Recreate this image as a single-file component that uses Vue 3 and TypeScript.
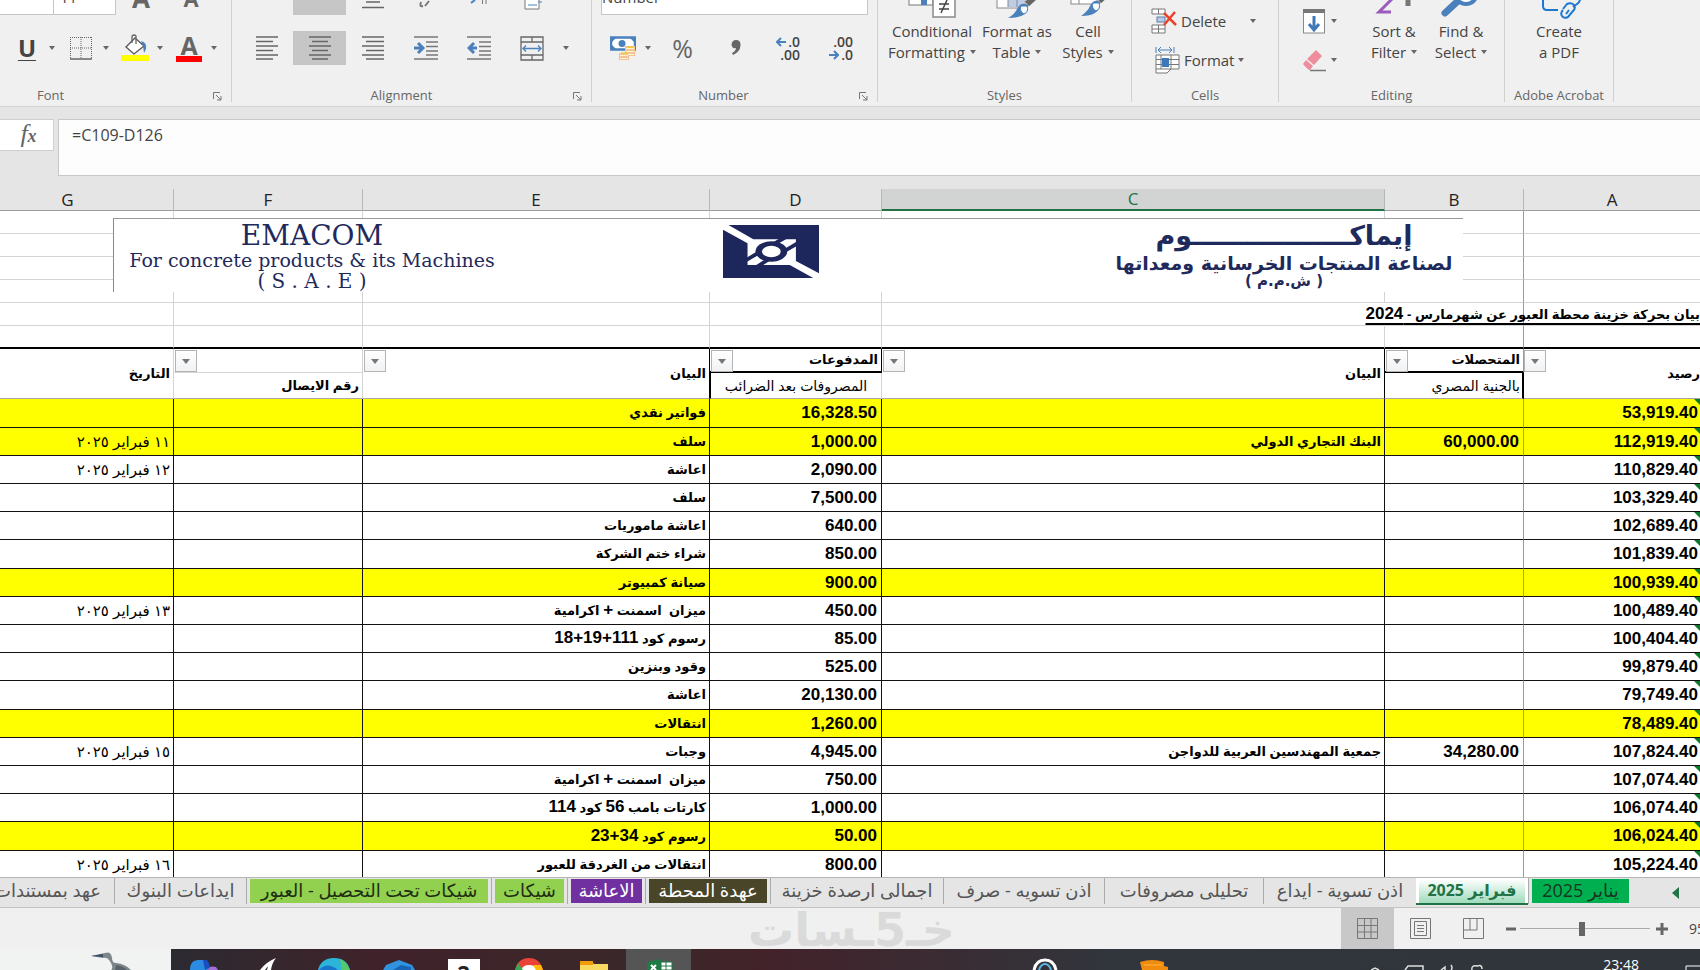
<script setup lang="ts">
import { ref } from 'vue'

interface Row {
  date?: string
  note: string
  paid: string
  source?: string
  received?: string
  balance: string
  marked?: boolean
}

interface SheetTab {
  name: string
  width: number
  kind: string
}

const columns = ['G', 'F', 'E', 'D', 'C', 'B', 'A']
const formula = ref('=C109-D126')
const zoom = ref(95)

const rows: Row[] = [
  { note: 'فواتير نقدي', paid: '16,328.50', balance: '53,919.40', marked: true },
  { date: '١١ فبراير ٢٠٢٥', note: 'سلف', paid: '1,000.00', source: 'البنك التجاري الدولي', received: '60,000.00', balance: '112,919.40', marked: true },
  { date: '١٢ فبراير ٢٠٢٥', note: 'اعاشة', paid: '2,090.00', balance: '110,829.40' },
  { note: 'سلف', paid: '7,500.00', balance: '103,329.40' },
  { note: 'اعاشة ماموريات', paid: '640.00', balance: '102,689.40' },
  { note: 'شراء ختم الشركة', paid: '850.00', balance: '101,839.40' },
  { note: 'صيانة كمبيوتر', paid: '900.00', balance: '100,939.40', marked: true },
  { date: '١٣ فبراير ٢٠٢٥', note: 'ميزان  اسمنت + اكرامية', paid: '450.00', balance: '100,489.40' },
  { note: 'رسوم كود 111+19+18', paid: '85.00', balance: '100,404.40' },
  { note: 'وقود وبنزين', paid: '525.00', balance: '99,879.40' },
  { note: 'اعاشة', paid: '20,130.00', balance: '79,749.40' },
  { note: 'انتقالات', paid: '1,260.00', balance: '78,489.40', marked: true },
  { date: '١٥ فبراير ٢٠٢٥', note: 'وجبات', paid: '4,945.00', source: 'جمعية المهندسين العربية للدواجن', received: '34,280.00', balance: '107,824.40' },
  { note: 'ميزان  اسمنت + اكرامية', paid: '750.00', balance: '107,074.40' },
  { note: 'كارتات بامب 56 كود 114', paid: '1,000.00', balance: '106,074.40' },
  { note: 'رسوم كود 34+23', paid: '50.00', balance: '106,024.40', marked: true },
  { date: '١٦ فبراير ٢٠٢٥', note: 'انتقالات من الغردقة للعبور', paid: '800.00', balance: '105,224.40' },
]

const tabs: SheetTab[] = [
  { name: 'يناير 2025', width: 104, kind: 'emerald' },
  { name: 'فبراير 2025', width: 112, kind: 'active' },
  { name: 'اذن تسوية - ايداع', width: 153, kind: 'plain' },
  { name: 'تحليلى مصروفات', width: 159, kind: 'plain' },
  { name: 'اذن تسويه - صرف', width: 161, kind: 'plain' },
  { name: 'اجمالى ارصدة خزينة', width: 173, kind: 'plain' },
  { name: 'عهدة المحطة', width: 125, kind: 'brown' },
  { name: 'الاعاشة', width: 78, kind: 'purple' },
  { name: 'شيكات', width: 76, kind: 'lime' },
  { name: 'شيكات تحت التحصيل - العبور', width: 245, kind: 'lime' },
  { name: 'ايداعات البنوك', width: 132, kind: 'plain' },
  { name: 'عهد بمستندات', width: 134, kind: 'plain' },
]

function parts(text: string): string[] {
  return text.split(/([0-9+]+)/).filter((p) => p !== '')
}
function isNumber(text: string): boolean {
  return /^[0-9+]+$/.test(text)
}
</script>

<template>
  <div class="window">
    <header class="ribbon">
      <section class="group g-font">
        <div class="line top">
          <input class="box name" aria-label="Font name" />
          <input class="box size" value="11" aria-label="Font size" />
          <button class="tool letter grow" aria-label="Increase font size">A</button>
          <button class="tool letter" aria-label="Decrease font size">A</button>
        </div>
        <div class="line">
          <span class="split">
            <button class="icon under" aria-label="Underline">U</button>
            <button class="caret" aria-label="Underline options"></button>
          </span>
          <span class="split">
            <button class="icon" aria-label="Borders">
              <svg width="24" height="24" viewBox="0 0 24 24" fill="none" stroke="#666">
                <path d="M1 1.5H23M1.5 1V22M22.5 1V22M12 1V22M1 12H23" stroke-dasharray="1 1" />
                <path d="M1 23H23" stroke-width="1.5" />
              </svg>
            </button>
            <button class="caret" aria-label="Border options"></button>
          </span>
          <span class="split">
            <button class="icon" aria-label="Fill color">
              <svg width="28" height="28" viewBox="0 0 28 28">
                <path d="M14 4L23 12L13 20L5 13Z" fill="#fff" stroke="#555" stroke-width="1.3" />
                <path d="M11 9V2Q13 0 15 2V10" fill="none" stroke="#666" stroke-width="1.3" />
                <path d="M20 7Q26 8 25 15L23 19L22 12Z" fill="#4a81bd" />
                <rect x="0" y="21" width="28" height="6" fill="#ff0" />
              </svg>
            </button>
            <button class="caret" aria-label="Fill options"></button>
          </span>
          <span class="split">
            <button class="icon fontcolor" aria-label="Font color">A</button>
            <button class="caret" aria-label="Font color options"></button>
          </span>
        </div>
        <div class="caption"><span>Font</span><button class="launch" aria-label="Font settings"><svg width="9" height="9" viewBox="0 0 9 9" fill="none" stroke="#777"><path d="M.5 7V.5H7M3 3L8 8M8 4V8H4" /></svg></button></div>
      </section>

      <section class="group g-align">
        <div class="line top">
          <button class="tool" aria-label="Top align"></button>
          <button class="tool on" aria-label="Middle align"></button>
          <button class="tool" aria-label="Bottom align"><svg width="22" height="34" viewBox="0 0 22 34" stroke="#666" stroke-width="1.5"><path d="M4 21H18M0 26.500H22" /></svg></button>
          <button class="tool" aria-label="Orientation"><svg width="22" height="34" viewBox="0 0 22 34" fill="none" stroke="#777" stroke-width="2"><path d="M10 25L14 20M8 25Q4 26 6 21" /></svg></button>
          <button class="tool" aria-label="Text direction"><svg width="22" height="34" viewBox="0 0 22 34" fill="none" stroke="#777"><path d="M14.500 18V23M18 18V23" /><path d="M7 19L3 22" stroke="#4a81bd" stroke-width="2" /></svg></button>
          <button class="tool" aria-label="Wrap text"><svg width="22" height="34" viewBox="0 0 22 34" fill="#fff" stroke="#777"><path d="M4 14V28H18V14" /><path d="M7 24H16M17 21H21" stroke="#4a81bd" /></svg></button>
        </div>
        <div class="line">
          <button class="tool" aria-label="Align left"><svg width="22" height="24" viewBox="0 0 22 24" stroke="#666" stroke-width="1.3"><path d="M0 1H22M0 5.500H17M0 10H22M0 14.500H17M0 19H22M0 23H17" /></svg></button>
          <button class="tool on" aria-label="Center"><svg width="22" height="24" viewBox="0 0 22 24" stroke="#666" stroke-width="1.3"><path d="M0 1H22M3 5.500H19M0 10H22M3 14.500H19M0 19H22M3 23H19" /></svg></button>
          <button class="tool" aria-label="Align right"><svg width="22" height="24" viewBox="0 0 22 24" stroke="#666" stroke-width="1.3"><path d="M0 1H22M4 5.500H22M0 10H22M4 14.500H22M0 19H22M4 23H22" /></svg></button>
          <button class="tool" aria-label="Increase indent"><svg width="24" height="24" viewBox="0 0 24 24" stroke="#777" stroke-width="1.3"><path d="M0 1H24M12 6H24M12 10.500H24M12 15H24M12 19H24M0 23H24" /><path d="M0 12H8M4 7L9 12L4 17" fill="none" stroke="#4a81bd" stroke-width="3" /></svg></button>
          <button class="tool" aria-label="Decrease indent"><svg width="24" height="24" viewBox="0 0 24 24" stroke="#777" stroke-width="1.3"><path d="M0 1H24M12 6H24M12 10.500H24M12 15H24M12 19H24M0 23H24" /><path d="M2 12H10M7 7L2 12L7 17" fill="none" stroke="#4a81bd" stroke-width="3" /></svg></button>
          <button class="tool" aria-label="Merge and center"><svg width="24" height="25" viewBox="0 0 24 25" fill="none" stroke="#666" stroke-width="1.3"><path d="M1 1H23V24H1ZM1 6H23M1 19H23M12 1V6M12 19V24" /><path d="M3 12.500H21M6 9.500L3 12.500L6 15.500M18 9.500L21 12.500L18 15.500" stroke="#4a81bd" /></svg></button>
          <button class="caret" aria-label="Merge options"></button>
        </div>
        <div class="caption"><span>Alignment</span><button class="launch" aria-label="Alignment settings"><svg width="9" height="9" viewBox="0 0 9 9" fill="none" stroke="#777"><path d="M.5 7V.5H7M3 3L8 8M8 4V8H4" /></svg></button></div>
      </section>

      <section class="group g-number">
        <div class="line top">
          <select class="box format" aria-label="Number format"><option>Number</option></select>
        </div>
        <div class="line">
          <span class="split">
            <button class="icon" aria-label="Accounting format">
              <svg width="26" height="25" viewBox="0 0 26 25">
                <rect x="1" y="1.500" width="24" height="12" fill="#fff" stroke="#4a81bd" stroke-width="2.500" />
                <circle cx="12" cy="7.500" r="3.500" fill="#4a81bd" /><path d="M2 2H6L2 6ZM24 2V6L20 2ZM2 13V9L6 13Z" fill="#4a81bd" />
                <path d="M15 10H25V20H19V24H9V17H15Z" fill="#f3c49a" />
                <path d="M16 12.500H24M16 15.500H24M18 18.500H24M10 19.500H18M10 22.500H18" stroke="#fff3c8" />
                <path d="M11 17H17M17 11H23" stroke="#f2c500" />
              </svg>
            </button>
            <button class="caret" aria-label="Accounting options"></button>
          </span>
          <button class="tool pct" aria-label="Percent style">%</button>
          <button class="tool" aria-label="Comma style"><svg width="12" height="18" viewBox="0 0 12 18" fill="#666"><path d="M6 1Q11 1 10.500 6.500Q10 13 3 16L2 14Q6 12 6 9Q2 10 1.500 5.500Q2 1 6 1Z" /></svg></button>
          <button class="tool dec" aria-label="Increase decimal">
            <span><svg width="10" height="10" viewBox="0 0 10 10" fill="none" stroke="#4a81bd" stroke-width="2"><path d="M1 5H10M5 1L1 5L5 9" /></svg>.0</span><span>.00</span>
          </button>
          <button class="tool dec" aria-label="Decrease decimal">
            <span>.00</span><span><svg width="10" height="10" viewBox="0 0 10 10" fill="none" stroke="#4a81bd" stroke-width="2"><path d="M0 5H9M5 1L9 5L5 9" /></svg>.0</span>
          </button>
        </div>
        <div class="caption"><span>Number</span><button class="launch" aria-label="Number settings"><svg width="9" height="9" viewBox="0 0 9 9" fill="none" stroke="#777"><path d="M.5 7V.5H7M3 3L8 8M8 4V8H4" /></svg></button></div>
      </section>

      <section class="group g-styles">
        <div class="bigs">
          <button class="big w92">
            <svg width="48" height="32" viewBox="0 0 48 32"><rect x="1" y="0" width="24" height="18" fill="#fff" stroke="#777" /><path d="M13 0V18H19V0Z" fill="#4a81bd" /><rect x="25" y="8" width="22" height="22" fill="#fff" stroke="#888" stroke-width="1.500" /><path d="M31 17H41M31 22H41M39 13L33 26" stroke="#444" stroke-width="1.500" /></svg>
            <span>Conditional</span><span>Formatting<i class="tri"></i></span>
          </button>
          <button class="big w78">
            <svg width="44" height="32" viewBox="0 0 44 32"><rect x="2" y="0" width="28" height="21" fill="#fff" stroke="#888" /><path d="M13 0H29V20H13Z" fill="#bccde5" /><path d="M13 0V20M22 0V20" stroke="#888" /><path d="M32 17L42 8" stroke="#666" stroke-width="6" /><path d="M33 18Q34 31 13 31Q20 27 22 22Q26 14 33 18Z" fill="#4a81bd" /><path d="M32 19Q34 25 29 27Q24 24 26 19Z" fill="#fff" stroke="#4a81bd" /></svg>
            <span>Format as</span><span>Table<i class="tri"></i></span>
          </button>
          <button class="big w64">
            <svg width="44" height="32" viewBox="0 0 44 32"><rect x="5" y="0" width="26" height="17" fill="#fff" stroke="#888" /><path d="M13 0V17" stroke="#888" /><path d="M33 14L43 5" stroke="#666" stroke-width="6" /><path d="M34 15Q35 29 15 29Q22 24 24 19Q28 11 34 15Z" fill="#4a81bd" /><path d="M33 16Q35 22 30 24Q25 21 27 16Z" fill="#fff" stroke="#4a81bd" /></svg>
            <span>Cell</span><span>Styles<i class="tri"></i></span>
          </button>
        </div>
        <div class="caption"><span>Styles</span></div>
      </section>

      <section class="group g-cells">
        <div class="stack">
          <button class="wide">
            <svg width="26" height="26" viewBox="0 0 26 26" fill="#fff" stroke="#777"><path d="M1 1H14V6H1ZM7.500 1V6M1 17H14V25H1ZM7.500 17V25M1 21H14" /><rect x="6" y="9" width="8" height="5" fill="#b8cce4" stroke="#5b7fae" /><path d="M13 5L25 17M24 4L13 17" stroke="#e8442c" stroke-width="2.500" /></svg>
            <span>Delete</span><i class="tri far"></i>
          </button>
          <button class="wide second">
            <svg width="26" height="28" viewBox="0 0 26 28" fill="#fff" stroke="#777"><path d="M2 9H25V23H2ZM2 13.500H25M2 18.500H25M7 9V23M17 9V23M2 23V27H13L17 23" /><rect x="8" y="12" width="7" height="9" fill="#3f78b8" stroke="none" /><path d="M2 1V7M20 1V7M4 4H18M7 1L4 4L7 7M15 1L18 4L15 7" fill="none" stroke="#4a81bd" /></svg>
            <span>Format</span><i class="tri"></i>
          </button>
        </div>
        <div class="caption"><span>Cells</span></div>
      </section>

      <section class="group g-edit">
        <div class="editing">
          <div class="stack">
            <button class="wide" aria-label="Fill"><svg width="24" height="26" viewBox="0 0 24 26"><rect x="1.500" y="2" width="21" height="23" fill="#fff" stroke="#888" /><path d="M1 1H23V5H1Z" fill="#777" /><path d="M12 8V21M7 16L12 22L17 16" fill="none" stroke="#3f78b8" stroke-width="3" /></svg><i class="tri"></i></button>
            <button class="wide second" aria-label="Clear"><svg width="24" height="24" viewBox="0 0 24 24"><path d="M14 2L20 8L12 17L5 11Z" fill="#ee8d9b" /><path d="M4 12L11 18L8 22Q6 22 1 16Z" fill="#ee8d9b" /><path d="M8 22.500H24" stroke="#777" stroke-width="1.500" /></svg><i class="tri"></i></button>
          </div>
          <button class="big w70">
            <svg width="44" height="32" viewBox="0 0 44 32" fill="none"><path d="M20 12L7 25H19" stroke="#9a5bbd" stroke-width="3" /><path d="M36 10V19" stroke="#777" stroke-width="5" /></svg>
            <span>Sort &amp;</span><span>Filter<i class="tri"></i></span>
          </button>
          <button class="big w64">
            <svg width="44" height="32" viewBox="0 0 44 32" fill="none" stroke="#4a81bd"><path d="M6 26L19 14" stroke-width="7" stroke-linecap="round" /><circle cx="27" cy="6" r="11" stroke-width="4" fill="#fff" /></svg>
            <span>Find &amp;</span><span>Select<i class="tri"></i></span>
          </button>
        </div>
        <div class="caption"><span>Editing</span></div>
      </section>

      <section class="group g-adobe">
        <div class="bigs">
          <button class="big w108">
            <svg width="50" height="34" viewBox="0 0 50 34" fill="none" stroke="#1d78cf" stroke-width="2"><path d="M9 2V21Q9 25 13 25H24" /><path d="M29 24L33 19Q37 17 40 20Q42 23 39 26L34 32Q30 34 28 31Q26 28 29 25M35 25L32 29M35 14L39 10Q44 8 46 12Q47 16 43 19L39 22" /></svg>
            <span>Create</span><span>a PDF</span>
          </button>
        </div>
        <div class="caption"><span>Adobe Acrobat</span></div>
      </section>
    </header>

    <div class="formula">
      <button class="fx" aria-label="Insert function"><em>f</em><em class="x">x</em></button>
      <textarea v-model="formula" aria-label="Formula bar"></textarea>
    </div>

    <main class="sheet">
      <table>
        <colgroup>
          <col v-for="c in columns" :key="c" :class="'col-' + c.toLowerCase()" />
        </colgroup>
        <thead>
          <tr class="letters">
            <th v-for="c in columns" :key="c" :class="{ chosen: c === 'C' }">{{ c }}</th>
          </tr>
        </thead>
        <tbody class="blank">
          <tr v-for="n in 4" :key="n"><td v-for="c in columns" :key="c"></td></tr>
          <tr class="heading">
            <td v-for="c in columns" :key="c"><span v-if="c === 'A'">بيان بحركة خزينة محطة العبور عن شهرمارس - <b>2024</b></span></td>
          </tr>
          <tr class="edge"><td v-for="c in columns" :key="c"></td></tr>
        </tbody>
        <tbody class="titles">
          <tr class="t1">
            <th rowspan="2" class="last">التاريخ</th>
            <th class="hair"><button class="filter" aria-label="تصفية رقم الايصال"></button></th>
            <th rowspan="2" class="last dark"><button class="filter" aria-label="تصفية البيان"></button>البيان</th>
            <th class="thick dark"><button class="filter" aria-label="تصفية المدفوعات"></button>المدفوعات</th>
            <th rowspan="2" class="last dark2"><button class="filter" aria-label="تصفية البيان"></button>البيان</th>
            <th class="thick"><button class="filter" aria-label="تصفية المتحصلات"></button>المتحصلات</th>
            <th rowspan="2" class="last end"><button class="filter" aria-label="تصفية الرصيد"></button>رصيد</th>
          </tr>
          <tr class="t2">
            <th class="last">رقم الايصال</th>
            <th class="last thin mid">المصروفات بعد الضرائب</th>
            <th class="last thin dark2">بالجنية المصري</th>
          </tr>
        </tbody>
        <tbody class="data">
          <tr v-for="(r, i) in rows" :key="i" :class="{ marked: r.marked }">
            <td class="date">{{ r.date }}</td>
            <td></td>
            <td class="ar"><span v-for="(p, k) in parts(r.note)" :key="k" :class="{ num: isNumber(p) }">{{ p }}</span></td>
            <td class="num">{{ r.paid }}</td>
            <td class="ar">{{ r.source }}</td>
            <td class="num">{{ r.received }}</td>
            <td class="num end">{{ r.balance }}</td>
          </tr>
        </tbody>
      </table>
      <div class="brand">
        <div class="latin"><strong>EMACOM</strong><span>For concrete products &amp; its Machines</span><b>( S . A . E )</b></div>
        <svg class="emblem" width="96" height="53" viewBox="0 0 266 156" preserveAspectRatio="none">
          <rect width="266" height="156" fill="#1d275b" />
          <path d="M0 0H15L84 42H202V106L266 142V156H250L185 118H68V54L0 14Z" fill="#fff" />
          <path d="M140 56L180 32M168 78L210 52M98 82L60 106M128 100L90 126" stroke="#1d275b" stroke-width="11" />
          <ellipse cx="134" cy="78" rx="44" ry="30" fill="#1d275b" />
          <ellipse cx="134" cy="78" rx="26" ry="17" fill="#fff" />
        </svg>
        <div class="arabic" dir="rtl"><strong>إيماكـــــــــــــــــوم</strong><span>لصناعة المنتجات الخرسانية ومعداتها</span><b>( ش.م.م )</b></div>
      </div>
    </main>

    <nav class="tabs" dir="rtl" aria-label="Sheets">
      <button class="scroll" aria-label="Scroll sheets"><svg width="7" height="12" viewBox="0 0 7 12"><path d="M7 0V12L0 6Z" fill="#217346" /></svg></button>
      <button v-for="t in tabs" :key="t.name" class="tab" :class="t.kind" :style="{ width: t.width + 'px' }"><span>{{ t.name }}</span></button>
    </nav>

    <footer class="status">
      <div class="watermark" dir="rtl">خـ5ـسات</div>
      <button class="view on" aria-label="Normal view"><svg width="21" height="21" viewBox="0 0 21 21" fill="none" stroke="#777"><path d="M.5 .5H20.500V20.500H.5ZM7.500 0V21M14 0V21M0 7.500H21M0 14H21" /></svg></button>
      <button class="view" aria-label="Page layout"><svg width="21" height="21" viewBox="0 0 21 21" fill="none" stroke="#777"><path d="M.5 .5H20.500V20.500H.5ZM4.500 3.500H16.500V17.500H4.500ZM7 7.500H14M7 10.500H14M7 13.500H14" /></svg></button>
      <button class="view" aria-label="Page break preview"><svg width="21" height="21" viewBox="0 0 21 21" fill="none" stroke="#777"><path d="M.5 .5H20.500V20.500H.5ZM7 0V12M14 0V12M0 12H14" /></svg></button>
      <button class="step" aria-label="Zoom out"><svg width="10" height="12" viewBox="0 0 10 12"><path d="M0 6H10" stroke="#666" stroke-width="3" /></svg></button>
      <input v-model="zoom" type="range" min="0" max="200" aria-label="Zoom" />
      <button class="step" aria-label="Zoom in"><svg width="12" height="12" viewBox="0 0 12 12"><path d="M0 6H12M6 0V12" stroke="#666" stroke-width="3" /></svg></button>
      <span class="percent">{{ zoom }}%</span>
    </footer>

    <div class="taskbar">
      <div class="search">
        <svg width="44" height="20" viewBox="0 0 44 20"><path d="M0 5L14 2Q20 0 21 7Q21 12 25 12Q35 13 41 20H19Q24 17 18 9Q16 6 12 7Z" fill="#7d8688" /><path d="M0 5L12 3V6Z" fill="#3b4b6b" /><path d="M25 14Q33 15 37 20H24Z" fill="#59636b" /></svg>
      </div>
      <div class="apps">
        <button aria-label="Copilot"><svg width="30" height="12" viewBox="0 0 30 12"><path d="M1 12Q1 2 9 2H17L20 12Z" fill="#2b8be0" /><path d="M14 2H18Q20 4 21 9L16 12Z" fill="#1b4fc0" /><path d="M19 12Q20 7 27 9L29 12Z" fill="#a070d8" /></svg></button>
        <button aria-label="Feather"><svg width="30" height="12" viewBox="0 0 30 12"><path d="M6 12Q12 4 22 0Q18 5 17 12H13L14 8L11 12Z" fill="#fff" /></svg></button>
        <button aria-label="Edge"><svg width="32" height="12" viewBox="0 0 32 12"><path d="M0 12Q3 0 16 0Q29 0 32 12Z" fill="#2bb5d8" /><path d="M22 1Q29 4 32 12H24Z" fill="#57c96a" /><path d="M1 12Q9 3 20 12Z" fill="#1877cc" /></svg></button>
        <button aria-label="Store"><svg width="32" height="12" viewBox="0 0 32 12"><path d="M0 12L3 7L16 2L29 7L32 12Z" fill="#2f93e0" /><path d="M10 12L18 7L28 9V12Z" fill="#1765b5" /></svg></button>
        <button class="two" aria-label="Workspace two"><span>2</span></button>
        <button aria-label="Chrome"><svg width="30" height="12" viewBox="0 0 30 12"><path d="M1 12Q4 0 15 0Q26 0 29 12Z" fill="#e94335" /><path d="M7 12Q9 7 15 7Q21 7 23 12Z" fill="#fff" /><path d="M1 12L4 5L9 12Z" fill="#3aa757" /><path d="M19 7H27L29 12H22Z" fill="#fbbc05" /></svg></button>
        <button aria-label="Files"><svg width="30" height="12" viewBox="0 0 30 12"><path d="M1 4H13L15 6H29V12H1Z" fill="#f7d860" /><path d="M1 3H14V7H1Z" fill="#f29a0c" /></svg></button>
        <button class="current" aria-label="Excel"><svg width="28" height="12" viewBox="0 0 28 12"><path d="M2 4L16 1V12H2Z" fill="#1e7b46" /><path d="M16 4H27V12H16Z" fill="#fff" stroke="#1e7b46" /><path d="M21 4V12M16 8H27" stroke="#1e7b46" /><path d="M6 7L11 12M11 7L6 12" stroke="#fff" stroke-width="2" /></svg></button>
      </div>
      <div class="tray">
        <svg class="t-circle" width="26" height="12" viewBox="0 0 26 12" fill="none"><path d="M2 12Q4 2 13 2Q22 2 24 12" stroke="#fff" stroke-width="3" /><path d="M7 12Q9 6 13 6Q17 6 19 12" stroke="#57b8e6" stroke-width="2" /></svg>
        <svg class="t-gold" width="28" height="12" viewBox="0 0 28 12"><path d="M0 4Q12 0 24 4V8L28 9V12H2Z" fill="#f08c10" /><path d="M4 7H22" stroke="#ffb638" /></svg>
        <svg class="t-icons" width="120" height="8" viewBox="0 0 120 8" fill="none" stroke="#ddd" stroke-width="1.500"><path d="M0 8L4 6L8 8M34 8L37 4H52V8M70 8L74 5V8M80 8Q82 6 80 3M101 8Q100 3 106 4Q111 2 111 7" /></svg>
        <time>23:48</time>
        <svg class="t-note" width="15" height="5" viewBox="0 0 15 5" fill="none" stroke="#fff"><path d="M1 5V1H15" /></svg>
      </div>
    </div>
  </div>
</template>

<style>
body {
  overflow: hidden;
}
</style>

<style scoped>
.window {
  display: flex;
  flex-direction: column;
  height: 100vh;
  overflow: hidden;
  background: #e5e5e5;
  color: #444;
  font: 15px "Open Sans", "DejaVu Sans", sans-serif;
}
button {
  margin: 0;
  padding: 0;
  border: 0;
  background: none;
  color: inherit;
  font: inherit;
}
svg {
  display: block;
  flex: none;
}
.ribbon {
  display: flex;
  flex: none;
  height: 106px;
  overflow: hidden;
  background: #f0f0f0;
  border-bottom: 1px solid #d2d2d2;
}
.group {
  display: flex;
  flex: none;
  flex-direction: column;
  justify-content: flex-end;
  box-sizing: border-box;
  height: 102px;
  border-right: 1px solid #d0d0d0;
}
.g-font { width: 232px; }
.g-align { width: 360px; }
.g-number { width: 286px; }
.g-styles { width: 254px; }
.g-cells { width: 147px; }
.g-edit { width: 226px; }
.g-adobe { width: 109px; }
.line {
  display: flex;
  flex: none;
  align-items: center;
  height: 34px;
}
.top {
  margin-bottom: 16px;
}
.g-font .line:not(.top) { padding-left: 10px; gap: 4px; }
.g-align .line { padding-left: 8px; }
.g-number .line:not(.top) { padding-left: 14px; }
.g-number .top { padding-left: 9px; }
.box {
  box-sizing: border-box;
  height: 34px;
  border: 1px solid #c6c6c6;
  border-radius: 0;
  background: #fff;
  color: #444;
  font: 15px "Open Sans", sans-serif;
}
.name { width: 54px; border-left: 0; }
.size { width: 62px; padding: 0 6px 2px; border-left: 0; }
.format {
  width: 267px;
  padding: 0 0 2px;
  appearance: none;
}
.letter { font-size: 22px; font-weight: 700; line-height: 34px; color: #666; }
.grow { font-size: 26px; }
.g-font .top .tool { width: 50px; }
.split {
  display: flex;
}
.icon {
  display: flex;
  justify-content: center;
  align-items: center;
  width: 34px;
  height: 34px;
}
.under {
  font-size: 24px;
  font-weight: 700;
  line-height: 26px;
  text-decoration: underline;
  text-decoration-thickness: 1px;
  text-underline-offset: 3px;
}
.fontcolor {
  width: 26px;
  height: 27px;
  margin: 4px;
  border-bottom: 6px solid #f00;
  box-sizing: border-box;
  color: #666;
  font-size: 25px;
  font-weight: 700;
  line-height: 20px;
}
.caret {
  display: flex;
  justify-content: center;
  align-items: center;
  width: 16px;
  height: 34px;
}
.caret::after,
.tri {
  display: inline-block;
  width: 0;
  height: 0;
  border: 3px solid transparent;
  border-top: 4px solid #666;
  border-bottom: 0;
  content: "";
}
.tri {
  margin-left: 5px;
  vertical-align: 4px;
}
.tool {
  display: flex;
  flex: none;
  justify-content: center;
  align-items: center;
  width: 53px;
  height: 34px;
}
.tool.on {
  background: #c6c6c6;
}
.pct { font-size: 25px; color: #666; }
.dec {
  flex-direction: column;
  align-items: flex-end;
  padding-right: 15px;
  box-sizing: border-box;
  font-size: 14px;
  font-weight: 600;
  line-height: 13px;
}
.dec span {
  display: flex;
  align-items: center;
  gap: 2px;
}
.caption {
  position: relative;
  display: flex;
  flex: none;
  justify-content: center;
  align-items: center;
  height: 20px;
  margin-top: 20px;
  margin-bottom: -3px;
  color: #666;
  font-size: 13px;
  white-space: nowrap;
}
.g-font .caption { padding-right: 130px; }
.g-number .caption { padding-right: 22px; }
.g-align .caption { padding-right: 20px; }
.launch {
  position: absolute;
  right: 9px;
  bottom: 4px;
}
.bigs,
.editing {
  display: flex;
  padding-left: 8px;
}
.g-adobe .bigs { padding: 0; }
.big {
  display: flex;
  flex: none;
  flex-direction: column;
  align-items: center;
  line-height: 21px;
  white-space: nowrap;
}
.big svg { margin-bottom: 2px; }
.w108 { width: 108px; }
.w92 { width: 92px; }
.w78 { width: 78px; }
.w70 { width: 70px; }
.w64 { width: 64px; }
.bigs + .caption { margin-top: 22px; }
.stack {
  display: flex;
  flex-direction: column;
  gap: 3px;
  padding-left: 19px;
}
.wide {
  display: flex;
  align-items: center;
  height: 36px;
  gap: 5px;
}
.wide .tri { margin-left: 0; }
.wide .far { margin-left: 20px; }
.g-cells .second { margin-left: 3px; }
.g-cells .wide { gap: 4px; }
.stack + .caption { margin-top: 7px; }
.editing { align-items: flex-end; padding-left: 4px; }
.editing .wide .tri { margin: 0; }
.editing .stack + .big { margin-left: 22px; }
.editing + .caption { margin-top: 7px; }
.editing .big { padding-bottom: 15px; }

.formula {
  display: flex;
  flex: none;
  align-items: flex-start;
  gap: 4px;
  height: 57px;
  padding: 12px 0 13px;
}
.fx {
  width: 54px;
  height: 32px;
  padding-left: 4px;
  border: 1px solid #cfcfcf;
  border-left: 0;
  background: #fff;
  box-sizing: border-box;
  color: #666;
  font: 26px/26px "Liberation Serif", serif;
}
.fx .x { font-size: 18px; font-weight: 700; }
textarea {
  flex: 1;
  box-sizing: border-box;
  height: 57px;
  padding: 5px 13px;
  border: 1px solid #c8c8c8;
  border-right: 0;
  background: #fdfdfd;
  color: #444;
  font: 16px/21px "Open Sans", sans-serif;
  resize: none;
}

.sheet {
  position: relative;
  flex: 1;
  min-height: 0;
  overflow: hidden;
  background: #fff;
}
table {
  width: 100%;
  border-spacing: 0;
  table-layout: fixed;
  color: #000;
  font: 700 13px/18px "Liberation Sans", "DejaVu Sans", sans-serif;
}
.col-g { width: 174px; }
.col-f { width: 189px; }
.col-e { width: 347px; }
.col-d { width: 172px; }
.col-b { width: 139px; }
.col-a { width: 176px; }
th, td {
  box-sizing: border-box;
  padding: 0 4px;
  border-right: 1px solid #d4d4d4;
  border-bottom: 1px solid #d4d4d4;
  white-space: nowrap;
}
tr > :nth-last-child(2) { border-right-color: #9a9a9a; }
tr > :last-child { border-right: 0; }
.letters th {
  height: 22px;
  border-right-color: #b8b8b8;
  border-bottom-color: #9c9c9c;
  background: #e5e5e5;
  color: #222;
  font: 400 17px/20px "Open Sans", sans-serif;
}
.letters th:first-child { padding-right: 42px; }
.letters .chosen {
  border-bottom: 2px solid #217346;
  background: #d2d4d3;
  color: #217346;
}
.blank td { height: 23px; }
.heading td:nth-child(5) { border-right-color: transparent; }
.heading td:last-child {
  padding: 0;
  direction: rtl;
}
.heading span {
  text-decoration: underline;
  text-decoration-thickness: 2px;
  text-underline-offset: 4px;
}
.heading b { font-size: 17px; }
.edge td { border-bottom: 2px solid #000; }
.titles th {
  position: relative;
  direction: rtl;
  text-align: right;
}
.t1 th { height: 24px; }
.t2 th { height: 26px; }
.titles .last { border-bottom-color: #a6a6a6; }
.titles .thick { border-bottom: 2px solid #000; }
.titles .dark, .titles .dark2 { border-right-color: #000; }
.titles .t2 .dark2 { border-right: 2px solid #000; }
.titles .t2 .mid {
  border-left: 1px solid #000;
  border-right-color: #d4d4d4;
  text-align: center;
}
.titles .t1 :nth-child(6) { border-right-color: #9a9a9a; }
.t1 th.last:not(.dark):not(.dark2):not(.end) { border-right-color: #d4d4d4; }
.titles .end { padding-right: 0; border-right: 0; }
.filter {
  position: absolute;
  top: 1px;
  left: 0;
  display: flex;
  justify-content: center;
  align-items: center;
  box-sizing: border-box;
  width: 22px;
  height: 22px;
  border: 1px solid #b4b4b4;
  background: linear-gradient(#fff, #f0f2f4);
}
.filter::after {
  border: 4px solid transparent;
  border-top: 5px solid #777;
  border-bottom: 0;
  content: "";
}
.titles .thin { font-size: 14px; font-weight: 400; }
.data td {
  height: 28px;
  border-color: #111;
  text-align: right;
}
.data tr:nth-child(5n + 1) td { height: 29px; }
.data td:nth-last-child(2) { border-right-color: #9a9a9a; }
.data .marked { background: #ff0; }
.ar { direction: rtl; white-space: pre; }
.date { direction: rtl; font-size: 15px; font-weight: 400; }
.num { font-size: 17px; }
.data .end {
  position: relative;
  padding-right: 2px;
}
.end.num::after {
  position: absolute;
  top: 0;
  right: 0;
  border-top: 6px solid #0b7a2a;
  border-left: 6px solid transparent;
  content: "";
}
.brand {
  position: absolute;
  top: 29px;
  left: 113px;
  right: 237px;
  display: flex;
  justify-content: space-between;
  box-sizing: border-box;
  height: 74px;
  padding: 0 6px 0 4px;
  border-top: 1px solid #999;
  border-left: 1px solid #888;
  background: #fff;
  color: #1f2a5c;
}
.latin, .arabic {
  display: flex;
  flex-direction: column;
  align-items: center;
  white-space: nowrap;
}
.latin {
  width: 388px;
  font-family: "DejaVu Serif", serif;
}
.latin strong { font-size: 28px; font-weight: 400; line-height: 34px; }
.latin span { font-size: 19px; line-height: 14px; }
.latin b { font-size: 20px; font-weight: 400; line-height: 28px; }
.emblem { margin-top: 6px; margin-right: 76px; }
.arabic {
  width: 346px;
  font-family: "DejaVu Sans", sans-serif;
}
.arabic strong { font-size: 27px; line-height: 34px; }
.arabic span { font-size: 19px; font-weight: 700; line-height: 20px; }
.arabic b { font-size: 15px; line-height: 17px; }

.tabs {
  display: flex;
  flex: none;
  align-items: flex-start;
  box-sizing: border-box;
  height: 31px;
  overflow: hidden;
  border-top: 1px solid #b5b5b5;
  border-bottom: 1px solid #c4c4c4;
  background: #e5e5e5;
  font: 18px/22px "Open Sans", "DejaVu Sans", sans-serif;
}
.scroll {
  display: flex;
  flex: none;
  align-items: center;
  width: 68px;
  height: 29px;
  padding-right: 21px;
}
.tab {
  display: flex;
  flex: none;
  box-sizing: border-box;
  height: 26px;
  padding: 1px 3px;
  border-left: 1px solid #ababab;
  white-space: nowrap;
}
.tab span { flex: 1; height: 24px; }
.plain { color: #555; }
.emerald span { background: #00b050; color: #17361f; }
.lime span { background: #92d050; color: #1e2d10; }
.purple span { background: #7030a0; color: #fff; }
.brown span { background: #494529; color: #fff; }
.active {
  height: 27px;
  border-left: 0;
  border-bottom: 2px solid #217346;
  background: #fff;
  color: #217346;
  font-size: 16px;
  font-weight: 700;
}
.active span { background: linear-gradient(#fff, #9fdcbc); }

.status {
  position: relative;
  display: flex;
  flex: none;
  justify-content: flex-end;
  align-items: center;
  height: 41px;
  overflow: hidden;
  background: #f0f0f0;
}
.view {
  display: flex;
  justify-content: center;
  align-items: center;
  width: 53px;
  height: 41px;
}
.view.on { background: #c8c8c8; }
.step { margin: 0 4px 0 6px; }
input[type="range"] {
  width: 130px;
  height: 16px;
  margin: 0;
  appearance: none;
  background: linear-gradient(#aaa, #aaa) center / 100% 1px no-repeat;
}
input[type="range"]::-webkit-slider-thumb {
  width: 6px;
  height: 14px;
  appearance: none;
  background: #666;
}
.percent {
  width: 11px;
  margin-left: 17px;
  overflow: hidden;
  font-size: 14px;
  white-space: nowrap;
}
.watermark {
  position: absolute;
  top: 0;
  left: 44%;
  color: #dadada;
  font: 700 46px/44px "DejaVu Sans", sans-serif;
  white-space: nowrap;
}

.taskbar {
  display: flex;
  flex: none;
  height: 21px;
  overflow: hidden;
  background: linear-gradient(90deg, #2b2b31 10%, #40222a 22%, #3a282a 38%, #43222a 45%, #31363d 66%, #2f353b);
}
.search {
  width: 171px;
  background: #f1f3f3;
}
.search svg { margin: 2px 0 0 91px; }
.apps {
  display: flex;
}
.apps button {
  display: flex;
  justify-content: center;
  align-items: flex-end;
  width: 65px;
  height: 21px;
}
.apps .two span {
  width: 32px;
  height: 11px;
  overflow: hidden;
  background: #fff;
  color: #222;
  font: 700 22px/26px "Open Sans", sans-serif;
}
.apps .current { background: #555; }
.tray {
  display: flex;
  flex: 1;
  align-items: flex-end;
  color: #fff;
}
.t-circle { margin-left: auto; }
.t-gold { margin-left: 82px; }
.t-icons { margin-left: 203px; }
time {
  height: 14px;
  margin-left: 112px;
  font-size: 14px;
  line-height: 18px;
}
.t-note { margin-left: 46px; }
</style>
